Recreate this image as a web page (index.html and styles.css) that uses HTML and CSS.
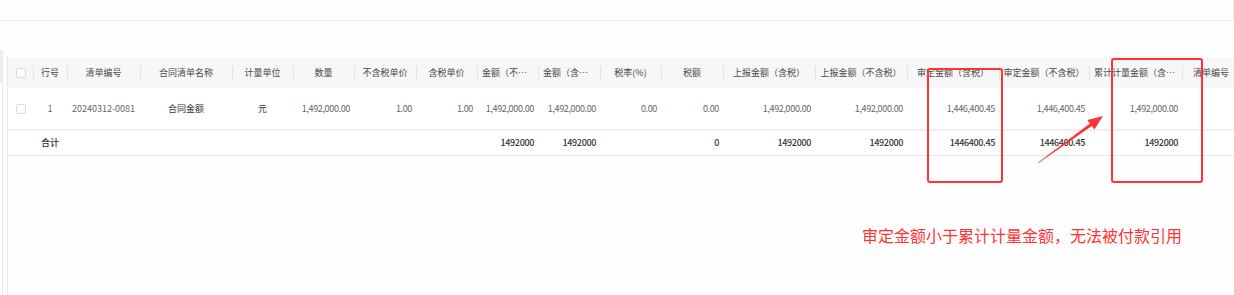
FILE: index.html
```
<!DOCTYPE html>
<html lang="zh-CN">
<head>
<meta charset="utf-8">
<title>清单</title>
<link rel="stylesheet" href="styles.css">
</head>
<body>
<div class="top-panel"></div>
<div class="content">
  <div class="side"><div class="side-head"></div></div>
  <div class="table-wrap">
    <div class="grid head">
      <div class="cell chk"><span class="box"></span></div>
      <div class="cell sep">行号</div>
      <div class="cell sep">清单编号</div>
      <div class="cell sep">合同清单名称</div>
      <div class="cell sep">计量单位</div>
      <div class="cell sep">数量</div>
      <div class="cell sep">不含税单价</div>
      <div class="cell sep">含税单价</div>
      <div class="cell sep left">金额（不含税）</div>
      <div class="cell sep left">金额（含税）</div>
      <div class="cell sep">税率(%)</div>
      <div class="cell sep">税额</div>
      <div class="cell sep">上报金额（含税）</div>
      <div class="cell sep">上报金额（不含税）</div>
      <div class="cell sep">审定金额（含税）</div>
      <div class="cell sep">审定金额（不含税）</div>
      <div class="cell sep left">累计计量金额（含税）</div>
      <div class="cell sep">清单编号</div>
    </div>
    <div class="grid row">
      <div class="cell chk"><span class="box"></span></div>
      <div class="cell c">1</div>
      <div class="cell c">20240312-0081</div>
      <div class="cell c dark">合同金额</div>
      <div class="cell c dark">元</div>
      <div class="cell r">1,492,000.00</div>
      <div class="cell r">1.00</div>
      <div class="cell r">1.00</div>
      <div class="cell r">1,492,000.00</div>
      <div class="cell r">1,492,000.00</div>
      <div class="cell r">0.00</div>
      <div class="cell r">0.00</div>
      <div class="cell r">1,492,000.00</div>
      <div class="cell r">1,492,000.00</div>
      <div class="cell r">1,446,400.45</div>
      <div class="cell r">1,446,400.45</div>
      <div class="cell r">1,492,000.00</div>
      <div class="cell c"></div>
    </div>
    <div class="grid total">
      <div class="cell"></div>
      <div class="cell c">合计</div>
      <div class="cell"></div>
      <div class="cell"></div>
      <div class="cell"></div>
      <div class="cell"></div>
      <div class="cell"></div>
      <div class="cell"></div>
      <div class="cell r">1492000</div>
      <div class="cell r">1492000</div>
      <div class="cell"></div>
      <div class="cell r">0</div>
      <div class="cell r">1492000</div>
      <div class="cell r">1492000</div>
      <div class="cell r">1446400.45</div>
      <div class="cell r">1446400.45</div>
      <div class="cell r">1492000</div>
      <div class="cell"></div>
    </div>
  </div>
</div>
<div class="mark mark-audit"></div>
<div class="mark mark-sum"></div>
<svg class="arrow" width="1234" height="295" viewBox="0 0 1234 295" aria-hidden="true">
  <polygon points="1037.8,162.8 1089.9,123.5 1087.3,119.9 1103,116 1094.4,129.6 1091.8,126.1 1038.2,163.2" fill="#ff3333"/>
</svg>
<div class="note">审定金额小于累计计量金额，无法被付款引用</div>
</body>
</html>
```
FILE: styles.css
```
html, body {
  margin: 0;
  padding: 0;
  overflow: hidden;
}
body {
  width: 1234px;
  height: 295px;
  background: #fefefe;
  font-family: "Noto Sans CJK SC", "Noto Sans", sans-serif;
  font-size: 9px;
  color: #555;
  position: relative;
}
.top-panel {
  height: 20px;
  background: #fdfdfd;
  border-bottom: 1px solid #ececec;
  border-right: 1px solid #ececec;
  box-sizing: content-box;
  width: 1233px;
}
.content {
  margin-top: 29px;
  height: 245px;
  display: flex;
}
.side {
  width: 2px;
  border-right: 1px solid #ececec;
  flex: none;
}
.side-head {
  height: 32px;
  background: #ededed;
}
.table-wrap {
  margin-left: 4px;
  margin-top: 7px;
  flex: 1;
  border-left: 1px solid #e8e8e8;
  overflow: hidden;
  min-width: 0;
}
.grid {
  display: grid;
  grid-template-columns: 25px 34px 73px 92px 61px 61px 62px 61px 61px 62px 61px 62px 92px 92px 92px 90px 93px 58px;
  width: 1232px;
}
.cell {
  padding: 0 4px;
  white-space: nowrap;
  overflow: hidden;
  position: relative;
}
.head {
  background: #f7f7f7;
  height: 31px;
  line-height: 31px;
  color: #4a4a4a;
}
.head .cell {
  text-align: center;
  text-overflow: ellipsis;
}
.head .left {
  padding: 0 6px 0 5px;
  text-align: left;
}
.head .sep::before {
  content: "";
  position: absolute;
  left: 0;
  top: 9px;
  width: 1px;
  height: 14px;
  background: #e4e4e4;
}
.chk {
  padding: 0;
  display: flex;
  align-items: center;
  justify-content: center;
}
.box {
  width: 10px;
  height: 10px;
  box-sizing: border-box;
  border: 1px solid #dcdcdc;
  border-radius: 2px;
  background: #fff;
}
.row {
  height: 41px;
  line-height: 41px;
  background: #fff;
  border-bottom: 2px solid #efefef;
  color: #666;
}
.total {
  height: 24px;
  line-height: 24px;
  background: #fff;
  border-bottom: 1px solid #e8e8e8;
  color: #333;
  font-weight: 500;
}
.c {
  text-align: center;
}
.r {
  text-align: right;
  padding: 0 4px 0 0;
  letter-spacing: -0.35px;
}
.dark {
  color: #333;
}
.mark {
  position: absolute;
  border: 2px solid #ff3333;
  border-radius: 3px;
  box-sizing: border-box;
}
.mark-audit {
  left: 927px;
  top: 68px;
  width: 76px;
  height: 115px;
}
.mark-sum {
  left: 1111px;
  top: 58px;
  width: 92px;
  height: 125px;
}
.arrow {
  position: absolute;
  left: 0;
  top: 0;
  pointer-events: none;
}
.note {
  position: absolute;
  left: 862px;
  top: 224px;
  font-size: 16px;
  line-height: 22px;
  color: #ff3333;
  white-space: nowrap;
}
```
